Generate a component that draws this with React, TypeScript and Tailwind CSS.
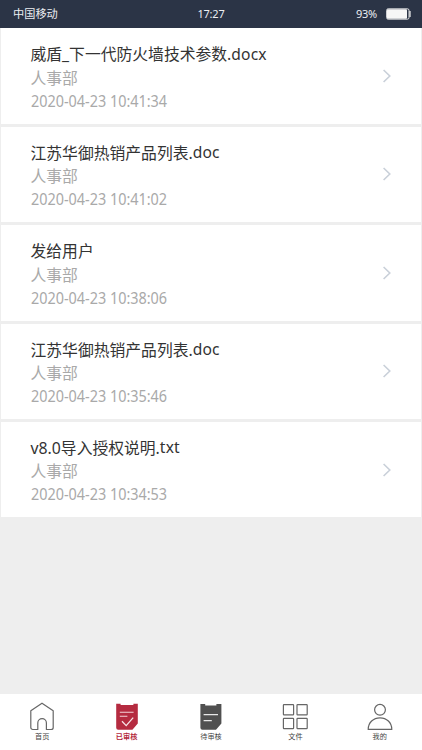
import React, { useState } from 'react';

interface FileRecord {
    id: number;
    name: string;
    ext: string;
    department: string;
    time: string;
}

const records: FileRecord[] = [
    { id: 1, name: '威盾_下一代防火墙技术参数.', ext: 'docx', department: '人事部', time: '2020-04-23 10:41:34' },
    { id: 2, name: '江苏华御热销产品列表.', ext: 'doc', department: '人事部', time: '2020-04-23 10:41:02' },
    { id: 3, name: '发给用户', ext: '', department: '人事部', time: '2020-04-23 10:38:06' },
    { id: 4, name: '江苏华御热销产品列表.', ext: 'doc', department: '人事部', time: '2020-04-23 10:35:46' },
    { id: 5, name: 'v8.0导入授权说明.', ext: 'txt', department: '人事部', time: '2020-04-23 10:34:53' },
];

const HomeIcon = () => (
    <svg width="26" height="30" viewBox="0 0 26 30" fill="none" stroke="#666" strokeWidth="1.2" strokeLinejoin="round">
        <path d="M1.8 9.8 13 2.2 24.2 9.8V26.5a2 2 0 0 1-2 2H17.4V22a4.3 4.3 0 0 0-8.6 0V28.5H3.8a2 2 0 0 1-2-2Z" />
    </svg>
);

const ReviewedIcon = () => (
    <svg width="26" height="30" viewBox="0 0 26 30" fill="none">
        <path d="M2.2 2.8H6.6V4H19.4V2.8H23.8V22.4L18.4 28.8H4.2a2 2 0 0 1-2-2Z" fill="#b52b40" />
        <path d="M5.8 11.2H19.6M5.8 15.2H13.4" stroke="#f3d3d8" strokeWidth="1.1" />
        <path d="M8 20.2 12.2 24.6 19.2 16.6" stroke="#f8e4e7" strokeWidth="1.3" />
    </svg>
);

const PendingIcon = () => (
    <svg width="26" height="30" viewBox="0 0 26 30" fill="none">
        <path d="M2.4 3H7.2V4.4H18.4V3H23.4V22.6L18 28.8H4.4a2 2 0 0 1-2-2Z" fill="#505050" />
        <path d="M5.6 13.6H20M5.6 19.6H13.8" stroke="#e8e8e8" strokeWidth="1.3" />
    </svg>
);

const FilesIcon = () => (
    <svg width="26" height="30" viewBox="0 0 26 30" fill="none" stroke="#666" strokeWidth="1.2">
        <rect x="1.4" y="3.6" width="10.2" height="10.2" rx="0.6" />
        <rect x="15" y="3.6" width="10.2" height="10.2" rx="0.6" />
        <rect x="1.4" y="17.4" width="10.2" height="10.2" rx="0.6" />
        <rect x="15" y="17.4" width="10.2" height="10.2" rx="0.6" />
    </svg>
);

const ProfileIcon = () => (
    <svg width="26" height="30" viewBox="0 0 26 30" fill="none" stroke="#666" strokeWidth="1.2">
        <circle cx="13" cy="8.8" r="5.4" />
        <path d="M1.2 28.4C1.2 21.4 6.4 16.8 13 16.8S24.8 21.4 24.8 28.4Z" strokeLinejoin="round" />
    </svg>
);

const tabs = [
    { key: 'home', label: '首页', Icon: HomeIcon },
    { key: 'reviewed', label: '已审核', Icon: ReviewedIcon },
    { key: 'pending', label: '待审核', Icon: PendingIcon },
    { key: 'files', label: '文件', Icon: FilesIcon },
    { key: 'profile', label: '我的', Icon: ProfileIcon },
];

const StatusBar = () => (
    <header className="grid h-[28.4px] shrink-0 grid-cols-3 items-center bg-[#2b3446] pl-[13px] pr-[11px] text-[11px] text-[#eceef2]">
        <span className="text-[11.2px]">中国移动</span>
        <span className="pr-[2px] text-center tracking-[-0.2px]">17:27</span>
        <span className="flex items-center justify-end gap-[9px]">
            <span className="tracking-[-0.2px]">93%</span>
            <svg width="25" height="12" viewBox="0 0 25 12" fill="none">
                <rect x="0.6" y="0.8" width="22.4" height="10.4" rx="1.6" stroke="#f2f2f2" strokeWidth="0.9" />
                <rect x="1" y="1.2" width="20" height="9.6" rx="1" fill="#f6f6f6" />
                <path d="M24 3V9" stroke="#f2f2f2" strokeWidth="1.2" />
            </svg>
        </span>
    </header>
);

const RecordRow: React.FC<{ record: FileRecord }> = ({ record }) => (
    <li className="flex h-[95.4px] items-center justify-between bg-white pl-[29.5px] pr-[29px]">
        <div className="pt-[4.4px]">
            <h2 className="flex h-[23px] items-center text-[15.8px] text-[#333]">
                <span>{record.name}</span>
                <span className="pb-0.5 font-['Noto_Sans'] text-[15.6px] tracking-[0.15px]">{record.ext}</span>
            </h2>
            <p className="h-[23px] text-[15.8px] leading-[23px] text-[#a9a9a9]">{record.department}</p>
            <p className="h-[23px] origin-left scale-x-[0.9] font-['Noto_Sans'] text-base leading-[23px] text-[#a9a9a9]">{record.time}</p>
        </div>
        <svg width="10" height="14" viewBox="0 0 10 14" fill="none" stroke="#c9d0d9" strokeWidth="1.6">
            <path d="M1.6 1 7.8 7 1.6 13" />
        </svg>
    </li>
);

const App: React.FC = () => {
    const [active, setActive] = useState('reviewed');

    return (
        <div className="flex h-screen flex-col bg-[#eee] font-['Noto_Sans','Noto_Sans_CJK_SC',sans-serif]">
            <StatusBar />
            <main className="min-h-0 flex-1 overflow-hidden px-px">
                <ul className="flex flex-col gap-[3px]">
                    {records.map(record => (
                        <RecordRow key={record.id} record={record} />
                    ))}
                </ul>
            </main>
            <nav className="grid h-[56.5px] shrink-0 grid-cols-5 bg-white">
                {tabs.map(({ key, label, Icon }) => (
                    <button key={key} onClick={() => setActive(key)} className="flex flex-col items-center pt-[7px]">
                        <Icon />
                        <span className={`text-[7.2px] leading-[11px] ${active === key ? 'font-bold text-[#b52b40]' : 'text-[#444]'}`}>
                            {label}
                        </span>
                    </button>
                ))}
            </nav>
        </div>
    );
};

export default App;
